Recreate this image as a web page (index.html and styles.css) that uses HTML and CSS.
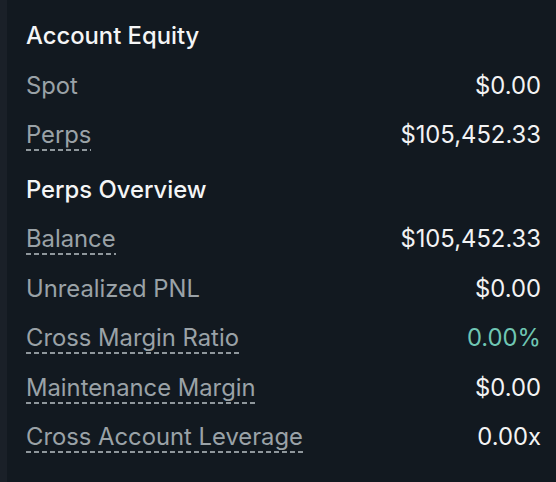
FILE: index.html
```html
<!DOCTYPE html>
<html>
<head>
<meta charset="utf-8">
<link rel="stylesheet" href="styles.css">
</head>
<body>
<div class="panel">
  <div class="section">
    <div class="title">Account Equity</div>
    <div class="row"><span class="label">Spot</span><span class="value">$0.00</span></div>
    <div class="row"><span class="label dashed">Perps</span><span class="value">$105,452.33</span></div>
  </div>
  <div class="section second">
    <div class="title">Perps Overview</div>
    <div class="row"><span class="label dashed">Balance</span><span class="value">$105,452.33</span></div>
    <div class="row"><span class="label">Unrealized PNL</span><span class="value">$0.00</span></div>
    <div class="row"><span class="label dashed">Cross Margin Ratio</span><span class="value teal">0.00%</span></div>
    <div class="row"><span class="label dashed">Maintenance Margin</span><span class="value">$0.00</span></div>
    <div class="row"><span class="label dashed">Cross Account Leverage</span><span class="value">0.00x</span></div>
  </div>
</div>
</body>
</html>
```
FILE: styles.css
```css
html, body {
  margin: 0;
  padding: 0;
  background: #121920;
  width: 556px;
  height: 482px;
  overflow: hidden;
}
.panel {
  box-sizing: border-box;
  height: 482px;
  border-left: 7px solid #1a2028;
  padding: 11px 15px 0 19px;
  font-family: Inter, "Noto Sans", sans-serif;
  font-size: 23.8px;
  line-height: 49.5px;
}
.title {
  color: #f4f5f6;
  font-weight: 500;
}
.second {
  margin-top: 5px;
}
.row {
  display: flex;
  justify-content: space-between;
  align-items: baseline;
}
.label {
  color: #9aa2a7;
  line-height: 33px;
}
.dashed {
  background-image: linear-gradient(to right, #8f979c 0 5px, transparent 5px 8px);
  background-size: 8px 2px;
  background-repeat: repeat-x;
  background-position: 0 100%;
}
.value {
  color: #f2f3f4;
}
.teal {
  color: #6fc6b3;
}
```
